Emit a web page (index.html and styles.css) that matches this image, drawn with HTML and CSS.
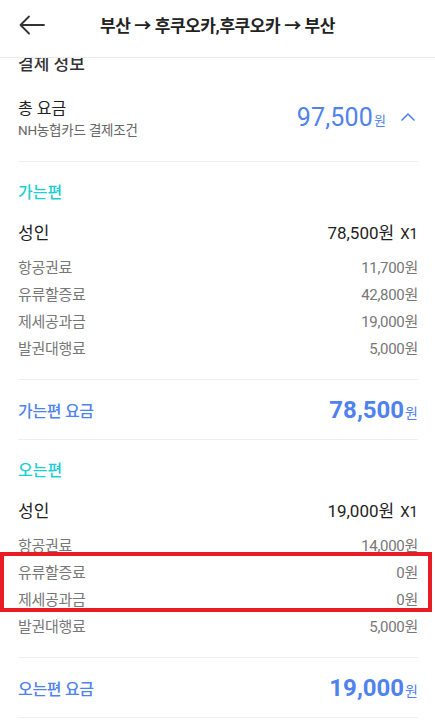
FILE: index.html
```html
<!DOCTYPE html>
<html lang="ko">
<head>
<meta charset="utf-8">
<title>결제 정보</title>
<link rel="stylesheet" href="styles.css">
</head>
<body>
<div class="page">
  <header class="header">
    <span class="back">
      <svg width="26" height="20" viewBox="0 0 26 20"><path d="M25 10H2M10 1.5L1.5 10L10 18.5" fill="none" stroke="#333" stroke-width="1.8" stroke-linecap="round" stroke-linejoin="round"/></svg>
    </span>
    <h1 class="title">부산 → 후쿠오카,후쿠오카 → 부산</h1>
  </header>
  <main class="scroll">
    <div class="content">
      <h2 class="sec-title">결제 정보</h2>
      <section class="block total">
        <div class="total-left">
          <div class="total-label">총 요금</div>
          <div class="total-sub">NH농협카드 결제조건</div>
        </div>
        <div class="total-right">
          <span class="total-amt">97,500</span><span class="total-won">원</span>
          <svg class="chev" width="14" height="9" viewBox="0 0 14 9"><path d="M1 8L7 2L13 8" fill="none" stroke="#4f82ee" stroke-width="1.6" stroke-linecap="round" stroke-linejoin="round"/></svg>
        </div>
      </section>

      <section class="block leg">
        <div class="leg-title">가는편</div>
        <div class="adult"><span>성인</span><span>78,500원<span class="x1">X1</span></span></div>
        <ul class="items">
          <li><span>항공권료</span><span>11,700원</span></li>
          <li><span>유류할증료</span><span>42,800원</span></li>
          <li><span>제세공과금</span><span>19,000원</span></li>
          <li><span>발권대행료</span><span>5,000원</span></li>
        </ul>
      </section>
      <section class="block sum">
        <span class="sum-label">가는편 요금</span>
        <span><span class="sum-amt">78,500</span><span class="sum-won">원</span></span>
      </section>

      <section class="block leg">
        <div class="leg-title">오는편</div>
        <div class="adult"><span>성인</span><span>19,000원<span class="x1">X1</span></span></div>
        <ul class="items">
          <li><span>항공권료</span><span>14,000원</span></li>
          <li class="hl-wrap">
            <div class="highlight"></div>
            <span>유류할증료</span><span>0원</span>
          </li>
          <li><span>제세공과금</span><span>0원</span></li>
          <li><span>발권대행료</span><span>5,000원</span></li>
        </ul>
      </section>
      <section class="block sum">
        <span class="sum-label">오는편 요금</span>
        <span><span class="sum-amt">19,000</span><span class="sum-won">원</span></span>
      </section>
    </div>
  </main>
</div>
</body>
</html>
```

FILE: styles.css
```css
* { box-sizing: border-box; margin: 0; padding: 0; }
html, body { width: 435px; height: 722px; overflow: hidden; background: #fff; }
body {
  font-family: Roboto, "Noto Sans CJK KR", "Noto Sans", sans-serif;
  color: #222;
}
.page { display: flex; flex-direction: column; height: 722px; }
.header {
  height: 58px;
  flex: none;
  border-bottom: 1px solid #ececec;
  display: flex;
  align-items: center;
  padding-left: 19px;
  padding-bottom: 8px;
}
.back { display: flex; width: 26px; height: 20px; }
.title {
  flex: 1;
  text-align: center;
  font-size: 17px;
  font-weight: 700;
  letter-spacing: -0.4px;
  margin-right: 45px;
  color: #222;
}
.scroll { flex: 1; overflow: hidden; }
.content { padding: 0 17px 0 18px; }
.sec-title {
  font-size: 17px;
  font-weight: 500;
  line-height: 24px;
  margin-top: -6px;
  color: #333;
}
.block { border-bottom: 1px solid #efefef; }
.total {
  display: flex;
  justify-content: space-between;
  align-items: center;
  margin-top: 22px;
  padding-bottom: 21px;
}
.total-label { font-size: 16px; line-height: 22px; font-weight: 400; color: #222; }
.total-sub { font-size: 13.5px; line-height: 20px; color: #666; letter-spacing: -0.2px; }
.total-right { display: flex; align-items: center; margin-top: -4px; }
.total-amt { font-size: 25px; color: #4f82ee; letter-spacing: 0.2px; }
.total-won { font-size: 13px; color: #4f82ee; margin-left: 1px; margin-top: 5px; }
.chev { margin-left: 15px; margin-right: 3px; margin-top: -2px; }

.leg { padding-bottom: 16px; }
.leg-title {
  font-size: 16px;
  line-height: 24px;
  margin-top: 19px;
  color: #1ccfd2;
  font-weight: 500;
}
.adult {
  display: flex;
  justify-content: space-between;
  font-size: 17px;
  line-height: 24px;
  margin-top: 16px;
  font-weight: 400;
  color: #1e1e1e;
}
.x1 { margin-left: 6px; font-size: 15px; }
.items { list-style: none; margin-top: 9px; }
.items li {
  display: flex;
  justify-content: space-between;
  font-size: 15px;
  line-height: 27px;
  color: #777;
  letter-spacing: -0.3px;
}
.hl-wrap { position: relative; }
.highlight {
  position: absolute;
  left: -18px;
  top: -8px;
  width: 432px;
  height: 60px;
  border: 4px solid #e81c24;
}
.sum {
  display: flex;
  justify-content: space-between;
  align-items: center;
  height: 60px;
}
.sum-label { font-size: 16px; color: #4f82ee; font-weight: 500; letter-spacing: -0.3px; }
.sum-amt { font-size: 24px; font-weight: 700; color: #4f82ee; }
.sum-won { font-size: 14px; color: #4f82ee; margin-left: 1px; }
```
